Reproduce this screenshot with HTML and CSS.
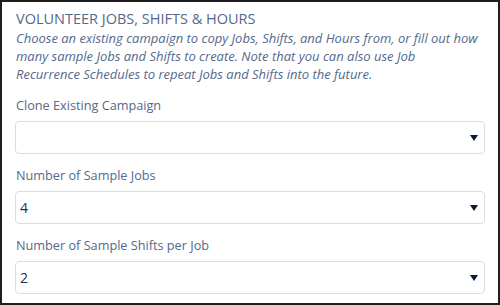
FILE: index.html
```html
<!DOCTYPE html>
<html lang="en">
<head>
    <meta charset="UTF-8">
    <title>Volunteer Jobs, Shifts &amp; Hours</title>
    <link rel="stylesheet" href="styles.css">
</head>
<body>

<div class="panel">
    <h3 class="section-title">Volunteer Jobs, Shifts &amp; Hours</h3>
    <p class="section-help">Choose an existing campaign to copy Jobs, Shifts, and Hours from, or fill out how<br>
        many sample Jobs and Shifts to create. Note that you can also use Job<br>
        Recurrence Schedules to repeat Jobs and Shifts into the future.</p>

    <div class="field">
        <label class="field-label" for="cloneCampaign">Clone Existing Campaign</label>
        <div class="select-wrap">
            <select id="cloneCampaign">
                <option value=""></option>
            </select>
        </div>
    </div>

    <div class="field">
        <label class="field-label" for="sampleJobs">Number of Sample Jobs</label>
        <div class="select-wrap">
            <select id="sampleJobs">
                <option>4</option>
            </select>
        </div>
    </div>

    <div class="field">
        <label class="field-label" for="sampleShifts">Number of Sample Shifts per Job</label>
        <div class="select-wrap">
            <select id="sampleShifts">
                <option>2</option>
            </select>
        </div>
    </div>
</div>

</body>
</html>
```

FILE: styles.css
```css
html, body {
    margin: 0;
    background: #fff;
}
.panel {
    box-sizing: border-box;
    width: 500px;
    height: 305px;
    border: 2px solid #1e1e1e;
    padding: 7px 13px 0 13px;
    font-family: 'Open Sans', sans-serif;
    color: #54698d;
    overflow: hidden;
}
.section-title {
    margin: 0 0 0 1px;
    font-size: 14.5px;
    font-weight: normal;
    line-height: 20px;
    text-transform: uppercase;
}
.section-help {
    margin: 0 0 0 1px;
    font-size: 13px;
    font-style: italic;
    line-height: 18px;
    white-space: nowrap;
}
.field {
    margin-top: 12px;
}
.field + .field {
    margin-top: 11px;
}
.field-label {
    display: block;
    margin-left: 1px;
    font-size: 12.7px;
    line-height: 20px;
    margin-bottom: 6px;
}
.select-wrap {
    position: relative;
}
.select-wrap select {
    display: block;
    width: 100%;
    height: 33px;
    padding: 0 28px 0 4px;
    border: 1px solid #d8dde6;
    border-radius: 4px;
    background: #fff;
    font-family: 'Open Sans', sans-serif;
    font-size: 14px;
    color: #16325c;
    -webkit-appearance: none;
    appearance: none;
    outline: none;
}
.select-wrap::after {
    content: '';
    position: absolute;
    right: 7px;
    top: 14px;
    border-left: 4px solid transparent;
    border-right: 4px solid transparent;
    border-top: 6px solid #061c3f;
    pointer-events: none;
}
```
